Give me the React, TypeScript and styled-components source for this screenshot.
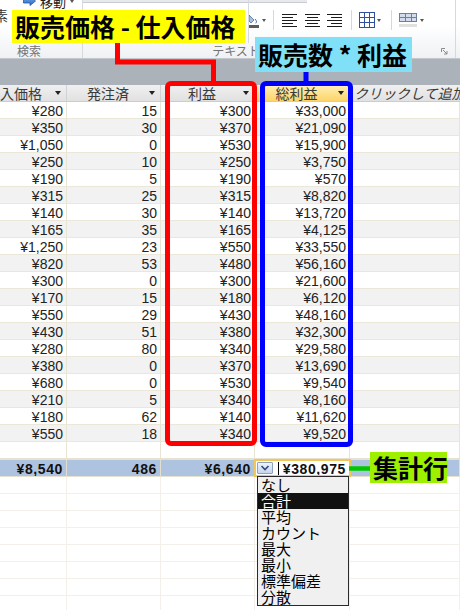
import React from "react";
import styled, { createGlobalStyle } from "styled-components";

const GlobalStyle = createGlobalStyle`
  html, body { margin: 0; padding: 0; background: #ffffff; }
  body { overflow: hidden; }
`;

const COLS = "67px 94px 94px 95px 1fr";

const Page = styled.div`
  position: relative;
  width: 460px;
  height: 610px;
  overflow: hidden;
  display: flex;
  flex-direction: column;
  background: #fff;
  font-family: "Noto Sans CJK JP", "Liberation Sans", sans-serif;
`;

/* ---------- Ribbon ---------- */
const Ribbon = styled.div`
  flex: none;
  height: 59px;
  box-sizing: border-box;
  display: flex;
  background: linear-gradient(#ffffff 0%, #ffffff 45%, #eff1f4 100%);
  border-bottom: 1px solid #c3c8cf;
  overflow: hidden;
`;

const Group = styled.div<{ $w: number }>`
  flex: none;
  width: ${(p) => p.$w}px;
  box-sizing: border-box;
  display: flex;
  flex-direction: column;
  border-right: 1px solid #d6d9dd;
  overflow: hidden;
`;

const GroupBody = styled.div`
  flex: 1;
  display: flex;
  min-height: 0;
`;

const GroupLabel = styled.div<{ $pr: number }>`
  flex: none;
  height: 14px;
  padding-right: ${(p) => p.$pr}px;
  display: grid;
  grid-template-columns: 1fr auto 1fr;
  align-items: center;
  font-size: 12px;
  line-height: 14px;
  color: #727272;
  white-space: nowrap;
`;

const GroupLabelText = styled.span`
  grid-column: 2;
`;

const Launcher = styled.svg`
  grid-column: 3;
  justify-self: end;
  margin-right: 1px;
`;

const FindPane = styled.div`
  display: flex;
  flex-direction: column;
`;

const MoveButton = styled.div`
  display: flex;
  align-items: center;
  gap: 4px;
  height: 14px;
  margin-top: -6px;
  padding-left: 23px;
  font-size: 13px;
  color: #222;
  white-space: nowrap;
`;

const CutGlyph = styled.div`
  margin-left: -6px;
  font-size: 14px;
  line-height: 14px;
  color: #333;
`;

const FontPane = styled.div`
  flex: none;
  width: 166px;
  height: 43px;
  box-sizing: border-box;
  border-right: 1px solid #d6d9dd;
`;

const ComboStub = styled.div<{ $w?: number }>`
  height: 3px;
  width: ${(p) => (p.$w ? `${p.$w}px` : "100%")};
  box-sizing: border-box;
  background: #e7e9ec;
  border-bottom: 1px solid #c8ccd2;
`;

const FormatPane = styled.div`
  flex: 1;
  display: flex;
  flex-direction: column;
`;

const IconRow = styled.div`
  display: flex;
  align-items: center;
  height: 20px;
  margin-top: 7px;
`;

const Slot = styled.span<{ $ml: number }>`
  display: flex;
  align-items: center;
  margin-left: ${(p) => p.$ml}px;
`;

const MiniDrop = styled.span<{ $ml?: number }>`
  flex: none;
  width: 0;
  height: 0;
  margin-left: ${(p) => p.$ml ?? 0}px;
  border-left: 2.5px solid transparent;
  border-right: 2.5px solid transparent;
  border-top: 3px solid #555;
`;

const RibbonSep = styled.span<{ $ml: number }>`
  flex: none;
  width: 1px;
  height: 20px;
  margin-left: ${(p) => p.$ml}px;
  background: #d5d8dc;
  box-shadow: 1px 0 0 #ffffff;
`;

/* ---------- Datasheet ---------- */
const Band = styled.div`
  flex: none;
  height: 26px;
  background: #abb2ba;
`;

const HeaderRow = styled.div`
  flex: none;
  display: grid;
  grid-template-columns: ${COLS};
  height: 17px;
  box-sizing: border-box;
  border-bottom: 1px solid #c9cdd2;
`;

const HeadCell = styled.div<{ $active?: boolean; $ghost?: boolean }>`
  display: flex;
  align-items: center;
  box-sizing: border-box;
  min-width: 0;
  overflow: hidden;
  white-space: nowrap;
  padding: ${(p) => (p.$ghost ? "0 0 0 4px" : "0 5px 0 0")};
  border-right: ${(p) => (p.$ghost ? "none" : "1px solid #cfd3d8")};
  background: ${(p) =>
    p.$active
      ? "linear-gradient(#ffefb8, #fdd468)"
      : "linear-gradient(#f0f0f0, #e1e1e1)"};
  font-size: 14px;
  line-height: 16px;
  color: #3a3a3a;
  font-style: ${(p) => (p.$ghost ? "italic" : "normal")};
`;

const HeadText = styled.span<{ $left?: boolean }>`
  flex: 1;
  text-align: ${(p) => (p.$left ? "left" : "center")};
`;

const SortArrow = styled.span`
  flex: none;
  width: 0;
  height: 0;
  border-left: 3.5px solid transparent;
  border-right: 3.5px solid transparent;
  border-top: 4px solid #222;
`;

const DataRow = styled.div<{ $alt?: boolean }>`
  flex: none;
  display: grid;
  grid-template-columns: ${COLS};
  height: 17px;
  box-sizing: border-box;
  background: ${(p) => (p.$alt ? "#f2f2f2" : "#ffffff")};
  border-bottom: 1px solid #ebe8da;
`;

const NewRow = styled(DataRow)`
  height: 18px;
  border-bottom: 2px solid #e6e2cf;
`;

const Cell = styled.div`
  box-sizing: border-box;
  min-width: 0;
  border-right: 1px solid #e8e5d5;
  padding: 0 3px 0 2px;
  text-align: right;
  font-family: "Liberation Sans", Arial, sans-serif;
  font-size: 14px;
  line-height: 18px;
  height: 16px;
  color: #222;
  white-space: nowrap;
  overflow: hidden;
`;

const TotalRow = styled.div`
  flex: none;
  display: grid;
  grid-template-columns: ${COLS};
  height: 17px;
  box-sizing: border-box;
  background: #aec3df;
  border-bottom: 1px solid #e6e2d2;
`;

const TotalCell = styled(Cell)`
  font-weight: 700;
  letter-spacing: 0.6px;
  color: #111;
  border-right-color: #e3dfcc;
`;

const ActiveCell = styled.div`
  position: relative;
  z-index: 1;
  display: flex;
  align-items: center;
  box-sizing: border-box;
  height: 16px;
  padding: 0 4px 0 2px;
  background: #ffffff;
  outline: 2px solid #f2c65a;
  outline-offset: -1px;
`;

const DropButton = styled.span`
  flex: none;
  width: 16px;
  height: 12px;
  box-sizing: border-box;
  display: flex;
  align-items: center;
  justify-content: center;
  border: 1px solid #8fa3c0;
  border-radius: 1px;
  background: linear-gradient(#eef4fc, #c6d6ec);
`;

const Caret = styled.span`
  flex: none;
  width: 1px;
  height: 13px;
  margin-left: 5px;
  background: #000;
`;

const ActiveValue = styled.span`
  flex: 1;
  text-align: right;
  font-family: "Liberation Sans", Arial, sans-serif;
  font-size: 14px;
  font-weight: 700;
  letter-spacing: 0.6px;
  color: #111;
  line-height: 16px;
  padding-top: 2px;
`;

const FillerRow = styled.div`
  flex: none;
  display: grid;
  grid-template-columns: ${COLS};
  height: 17px;
  box-sizing: border-box;
  border-bottom: 1px solid #f2f0e9;
`;

const FillerCell = styled.div`
  border-right: 1px solid #f2f0e9;
`;

/* ---------- Overlays ---------- */
const Frame = styled.div<{ $color: string; $x: number; $y: number; $w: number; $h: number }>`
  position: absolute;
  z-index: 2;
  left: ${(p) => p.$x}px;
  top: ${(p) => p.$y}px;
  width: ${(p) => p.$w}px;
  height: ${(p) => p.$h}px;
  box-sizing: border-box;
  border: 5px solid ${(p) => p.$color};
  border-radius: 6px;
`;

const Connectors = styled.svg`
  position: absolute;
  z-index: 3;
  left: 0;
  top: 0;
  pointer-events: none;
`;

const Callout = styled.div<{ $bg: string; $x: number; $y: number; $w: number; $h: number }>`
  position: absolute;
  z-index: 4;
  left: ${(p) => p.$x}px;
  top: ${(p) => p.$y}px;
  width: ${(p) => p.$w}px;
  height: ${(p) => p.$h}px;
  box-sizing: border-box;
  padding-left: 3px;
  background: ${(p) => p.$bg};
  font-family: "Noto Sans CJK JP", sans-serif;
  font-weight: 700;
  font-size: 25px;
  line-height: ${(p) => p.$h}px;
  color: #000;
  white-space: nowrap;
`;

const Menu = styled.ul`
  position: absolute;
  z-index: 5;
  left: 257px;
  top: 476px;
  width: 92px;
  margin: 0;
  padding: 0;
  list-style: none;
  box-sizing: border-box;
  border: 1px solid #2a2a2a;
  background: #f0f0f0;
`;

const MenuItem = styled.li<{ $on?: boolean }>`
  height: 16px;
  padding-left: 3px;
  font-size: 15px;
  line-height: 16px;
  color: ${(p) => (p.$on ? "#ffffff" : "#000000")};
  background: ${(p) => (p.$on ? "#111111" : "transparent")};
  white-space: nowrap;
`;

/* ---------- Icons ---------- */
const MoveArrow = () => (
  <svg width="13" height="10" viewBox="0 0 13 10">
    <defs>
      <linearGradient id="mv" x1="0" y1="0" x2="0" y2="1">
        <stop offset="0" stopColor="#6fa8ec" />
        <stop offset="1" stopColor="#2e69c2" />
      </linearGradient>
    </defs>
    <path d="M0.5 3H7V0.5L12.5 5L7 9.5V7H0.5Z" fill="url(#mv)" stroke="#2456a6" strokeWidth="0.8" />
  </svg>
);

const PaintIcon = () => (
  <svg width="10" height="17" viewBox="0 0 10 17">
    <path d="M0 3L5 8L2 11L0 9Z" fill="#a9c0e2" stroke="#4a6ea6" strokeWidth="0.8" />
    <path d="M6 7C8 9 8 11 6.5 11" fill="none" stroke="#4a6ea6" strokeWidth="1" />
    <rect x="0" y="13" width="10" height="3" fill="#5c5c5c" />
  </svg>
);

const AlignIcon = ({ mode }: { mode: "l" | "c" | "r" }) => {
  const rows = [15, 11, 15, 11, 15];
  return (
    <svg width="15" height="13" viewBox="0 0 15 13">
      {rows.map((len, i) => {
        const x = mode === "l" ? 0 : mode === "c" ? (15 - len) / 2 : 15 - len;
        return <rect key={i} x={x} y={i * 3} width={len} height="1" fill="#1c1c1c" />;
      })}
    </svg>
  );
};

const GridIcon = () => (
  <svg width="16" height="16" viewBox="0 0 16 16">
    <rect x="0.5" y="0.5" width="15" height="15" fill="#fff" stroke="#2f4f9f" />
    <path d="M5.5 0.5V15.5M10.5 0.5V15.5M0.5 5.5H15.5M0.5 10.5H15.5" stroke="#2f4f9f" />
  </svg>
);

const AltRowIcon = () => (
  <svg width="18" height="14" viewBox="0 0 18 14">
    <rect x="0.5" y="0.5" width="17" height="8" fill="#d4ddee" stroke="#6d7e9e" />
    <path d="M6.5 0.5V8.5M12.5 0.5V8.5M0.5 4.5H17.5" stroke="#6d7e9e" />
    <rect x="0" y="11" width="18" height="3" fill="#e0e0e0" />
  </svg>
);

const LauncherIcon = () => (
  <Launcher width="7" height="7" viewBox="0 0 7 7">
    <path d="M0.5 4V0.5H4" fill="none" stroke="#8a8a8a" />
    <path d="M2 2L6 6M6 3V6H3" fill="none" stroke="#8a8a8a" />
  </Launcher>
);

const Chevron = () => (
  <svg width="10" height="6" viewBox="0 0 10 6">
    <polyline points="1.5,1 5,4.5 8.5,1" fill="none" stroke="#2f4a7c" strokeWidth="1.6" />
  </svg>
);

/* ---------- Data ---------- */
const cost = ["¥280", "¥350", "¥1,050", "¥250", "¥190", "¥315", "¥140", "¥165", "¥1,250", "¥820", "¥300", "¥170", "¥550", "¥430", "¥280", "¥380", "¥680", "¥210", "¥180", "¥550"];
const ordered = ["15", "30", "0", "10", "5", "25", "30", "35", "23", "53", "0", "15", "29", "51", "80", "0", "0", "5", "62", "18"];
const profit = ["¥300", "¥370", "¥530", "¥250", "¥190", "¥315", "¥140", "¥165", "¥550", "¥480", "¥300", "¥180", "¥430", "¥380", "¥340", "¥370", "¥530", "¥340", "¥140", "¥340"];
const total = ["¥33,000", "¥21,090", "¥15,900", "¥3,750", "¥570", "¥8,820", "¥13,720", "¥4,125", "¥33,550", "¥56,160", "¥21,600", "¥6,120", "¥48,160", "¥32,300", "¥29,580", "¥13,690", "¥9,540", "¥8,160", "¥11,620", "¥9,520"];

const menuItems = ["なし", "合計", "平均", "カウント", "最大", "最小", "標準偏差", "分散"];

export default function App() {
  return (
    <Page>
      <GlobalStyle />
      <Ribbon>
        <Group $w={83}>
          <GroupBody>
            <FindPane>
              <MoveButton>
                <MoveArrow />
                <span>移動</span>
                <MiniDrop />
              </MoveButton>
              <CutGlyph>素</CutGlyph>
            </FindPane>
          </GroupBody>
          <GroupLabel $pr={24}>
            <GroupLabelText>検索</GroupLabelText>
          </GroupLabel>
        </Group>
        <Group $w={373}>
          <GroupBody>
            <FontPane>
              <ComboStub />
            </FontPane>
            <FormatPane>
              <ComboStub $w={58} />
              <IconRow>
                <Slot $ml={0}>
                  <PaintIcon />
                </Slot>
                <MiniDrop $ml={3} />
                <RibbonSep $ml={7} />
                <Slot $ml={8}>
                  <AlignIcon mode="l" />
                </Slot>
                <Slot $ml={8}>
                  <AlignIcon mode="c" />
                </Slot>
                <Slot $ml={7}>
                  <AlignIcon mode="r" />
                </Slot>
                <RibbonSep $ml={9} />
                <Slot $ml={7}>
                  <GridIcon />
                </Slot>
                <MiniDrop $ml={2} />
                <RibbonSep $ml={10} />
                <Slot $ml={7}>
                  <AltRowIcon />
                </Slot>
                <MiniDrop $ml={3} />
              </IconRow>
            </FormatPane>
          </GroupBody>
          <GroupLabel $pr={6}>
            <GroupLabelText>テキストの書式設定</GroupLabelText>
            <LauncherIcon />
          </GroupLabel>
        </Group>
      </Ribbon>

      <Band />

      <HeaderRow>
        <HeadCell>
          <HeadText $left>入価格</HeadText>
          <SortArrow />
        </HeadCell>
        <HeadCell>
          <HeadText>発注済</HeadText>
          <SortArrow />
        </HeadCell>
        <HeadCell>
          <HeadText>利益</HeadText>
          <SortArrow />
        </HeadCell>
        <HeadCell $active>
          <HeadText>総利益</HeadText>
          <SortArrow />
        </HeadCell>
        <HeadCell $ghost>
          <HeadText $left>クリックして追加</HeadText>
        </HeadCell>
      </HeaderRow>

      {cost.map((c, i) => (
        <DataRow key={i} $alt={i % 2 === 1}>
          <Cell>{c}</Cell>
          <Cell>{ordered[i]}</Cell>
          <Cell>{profit[i]}</Cell>
          <Cell>{total[i]}</Cell>
          <Cell />
        </DataRow>
      ))}

      <NewRow>
        <Cell />
        <Cell />
        <Cell />
        <Cell />
        <Cell />
      </NewRow>

      <TotalRow>
        <TotalCell>¥8,540</TotalCell>
        <TotalCell>486</TotalCell>
        <TotalCell>¥6,640</TotalCell>
        <ActiveCell>
          <DropButton>
            <Chevron />
          </DropButton>
          <Caret />
          <ActiveValue>¥380,975</ActiveValue>
        </ActiveCell>
        <TotalCell />
      </TotalRow>

      {Array.from({ length: 8 }).map((_, i) => (
        <FillerRow key={i}>
          <FillerCell />
          <FillerCell />
          <FillerCell />
          <FillerCell />
          <FillerCell />
        </FillerRow>
      ))}

      <Frame $color="#ff0000" $x={165} $y={81} $w={92} $h={365} />
      <Frame $color="#0000ff" $x={260} $y={81} $w={93} $h={366} />

      <Connectors width="460" height="610" viewBox="0 0 460 610">
        <polyline points="117.5,42 117.5,62 213.5,62 213.5,83" fill="none" stroke="#ff0000" strokeWidth="5" />
        <polyline points="306,71 306,83" fill="none" stroke="#0000ff" strokeWidth="5" />
        <polyline points="349,468.5 371,468.5" fill="none" stroke="#00c800" strokeWidth="4.5" />
      </Connectors>

      <Callout $bg="#ffff00" $x={12} $y={10} $w={233} $h={33}>
        販売価格 - 仕入価格
      </Callout>
      <Callout $bg="#80e0f8" $x={255} $y={37} $w={157} $h={35}>
        販売数 * 利益
      </Callout>
      <Callout $bg="#9cf000" $x={370} $y={452} $w={77} $h={31}>
        集計行
      </Callout>

      <Menu>
        {menuItems.map((m) => (
          <MenuItem key={m} $on={m === "合計"}>
            {m}
          </MenuItem>
        ))}
      </Menu>
    </Page>
  );
}
